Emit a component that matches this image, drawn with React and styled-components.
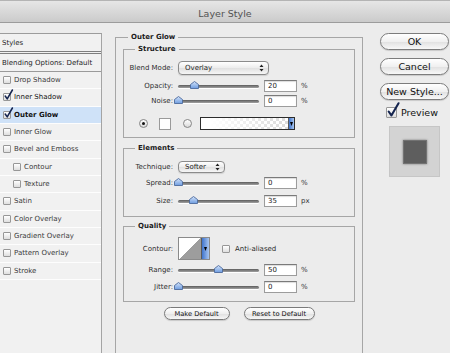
import React from "react";
import styled, { createGlobalStyle } from "styled-components";

const GlobalStyle = createGlobalStyle`
  html, body {
    margin: 0;
    padding: 0;
  }
  body {
    width: 450px;
    height: 353px;
    overflow: hidden;
    background: #ececec;
    font-family: "DejaVu Sans", Verdana, sans-serif;
    font-size: 7px;
    color: #262626;
  }
`;

const Window = styled.div`
  width: 450px;
  height: 353px;
  display: flex;
  flex-direction: column;
  background: #ececec;
  overflow: hidden;
`;

const TitleBar = styled.div`
  flex: none;
  height: 23px;
  box-sizing: border-box;
  padding-top: 3px;
  border-top: 1px solid #b4b4b4;
  border-bottom: 1px solid #9c9c9c;
  background: linear-gradient(#e6e6e6, #cbcbcb);
  display: flex;
  align-items: center;
  justify-content: center;
  font-size: 9.5px;
  color: #525252;
`;

const Body = styled.div`
  flex: 1;
  min-height: 0;
  display: flex;
`;

/* ---------- left styles list ---------- */

const StylesPanel = styled.div`
  flex: none;
  width: 102px;
  margin-top: 10px;
  box-sizing: border-box;
  border-top: 1px solid #9c9c9c;
  border-right: 1px solid #a4a4a4;
  background: #f1f1f1;
`;

const PanelHead = styled.div`
  height: ${(p) => p.$h}px;
  box-sizing: border-box;
  padding-left: 2px;
  display: flex;
  align-items: center;
  border-bottom: ${(p) => p.$line};
  white-space: nowrap;
`;

const EffectRow = styled.div`
  height: 17.33px;
  box-sizing: border-box;
  border-bottom: 1px solid #fdfdfd;
  display: flex;
  align-items: center;
  gap: 3px;
  padding-left: ${(p) => (p.$sub ? 13 : 3)}px;
  background: ${(p) => (p.$sel ? "#cfe2f8" : "transparent")};
  font-weight: ${(p) => (p.$sel ? "bold" : "normal")};
  color: ${(p) => (p.$on ? "#111" : "#3a3a3a")};
  white-space: nowrap;
`;

const Box = styled.span`
  position: relative;
  flex: none;
  width: ${(p) => p.$s}px;
  height: ${(p) => p.$s}px;
  box-sizing: border-box;
  border: 1px solid #979797;
  border-radius: 1px;
  background: linear-gradient(#ffffff, #dedede);
`;

const Tick = styled.svg`
  position: absolute;
  left: 0;
  bottom: 0;
  overflow: visible;
`;

const Check = ({ size = 8, on }) => (
  <Box $s={size}>
    {on && (
      <Tick width={size} height={size} viewBox="0 0 10 10">
        <path
          d="M1.5 5 L4 8.6 L10.5 -2.5"
          fill="none"
          stroke="#14244f"
          strokeWidth="1.9"
          strokeLinecap="round"
          strokeLinejoin="round"
        />
      </Tick>
    )}
  </Box>
);

/* ---------- main settings ---------- */

const Main = styled.div`
  flex: none;
  width: 248px;
  margin: 9px 0 0 13px;
`;

const Group = styled.fieldset`
  margin: ${(p) => p.$mt || 0}px 0 0 0;
  min-width: 0;
  box-sizing: border-box;
  border: 1px solid #a6a6a6;
  padding: ${(p) => p.$pad};
  height: ${(p) => (p.$tall ? "330px" : "auto")};
`;

const Legend = styled.legend`
  margin-left: ${(p) => p.$ml}px;
  padding: 0 3px;
  line-height: 10px;
  font-weight: bold;
  color: #1c1c1c;
`;

const Row = styled.div`
  display: flex;
  align-items: center;
  height: ${(p) => p.$h}px;
  margin-top: ${(p) => p.$mt || 0}px;
  padding-left: ${(p) => p.$indent || 0}px;
  white-space: nowrap;
`;

const Label = styled.span`
  flex: none;
  width: 49px;
  margin-right: 5px;
  text-align: right;
  color: #2e2e2e;
`;

const Popup = styled.div`
  flex: none;
  width: ${(p) => p.$w}px;
  height: ${(p) => p.$h}px;
  box-sizing: border-box;
  border: 1px solid #8b8b8b;
  border-radius: 4px;
  background: linear-gradient(#ffffff, #ececec 50%, #e0e0e0 51%, #f6f6f6);
  box-shadow: 0 1px 1px rgba(0, 0, 0, 0.12);
  display: flex;
  align-items: center;
  justify-content: space-between;
  padding: 0 4px 0 6px;
  color: #1f1f1f;
`;

const Arrows = () => (
  <svg width="5" height="8" viewBox="0 0 5 8">
    <path d="M2.5 0.5 L4.5 3 L0.5 3 Z M2.5 7.5 L4.5 5 L0.5 5 Z" fill="#222" />
  </svg>
);

const Track = styled.div`
  position: relative;
  flex: none;
  width: 81px;
  height: 3px;
  border-radius: 2px;
  background: linear-gradient(#5c5c5c, #a2a2a2);
  box-shadow: 0 1px 0 #ffffff;
`;

const Thumb = styled.svg`
  position: absolute;
  top: -4px;
  margin-left: -4.5px;
`;

const Field = styled.div`
  flex: none;
  width: 33px;
  height: 12px;
  box-sizing: border-box;
  margin-left: 5px;
  padding-left: 3px;
  border: 1px solid #9c9c9c;
  border-top-color: #7a7a7a;
  background: #fff;
  box-shadow: inset 0 1px 1px rgba(0, 0, 0, 0.14);
  line-height: 10px;
  color: #222;
`;

const Unit = styled.span`
  margin-left: 4px;
  color: #333;
`;

const Slider = ({ label, pct, value, unit }) => (
  <>
    <Label>{label}</Label>
    <Track>
      <Thumb
        width="9"
        height="8"
        viewBox="0 0 9 8"
        style={{ left: `${pct}%` }}
      >
        <defs>
          <linearGradient id="th" x1="0" y1="0" x2="0" y2="1">
            <stop offset="0" stopColor="#d4e4fa" />
            <stop offset="1" stopColor="#6e9ce0" />
          </linearGradient>
        </defs>
        <path
          d="M0.5 3.5 L4.5 0.5 L8.5 3.5 L8.5 7.5 L0.5 7.5 Z"
          fill="url(#th)"
          stroke="#4c6a9c"
          strokeWidth="0.9"
        />
      </Thumb>
    </Track>
    <Field>{value}</Field>
    <Unit>{unit}</Unit>
  </>
);

const Radio = styled.span`
  flex: none;
  width: 9px;
  height: 9px;
  box-sizing: border-box;
  border-radius: 50%;
  border: 1px solid #868686;
  background: linear-gradient(#ffffff, #d9d9d9);
  display: flex;
  align-items: center;
  justify-content: center;
  margin-right: ${(p) => p.$mr}px;

  &::after {
    content: "";
    display: ${(p) => (p.$on ? "block" : "none")};
    width: 3px;
    height: 3px;
    border-radius: 50%;
    background: #111;
  }
`;

const Swatch = styled.span`
  flex: none;
  width: 12px;
  height: 12px;
  box-sizing: border-box;
  border: 1px solid #9a9a9a;
  background: #fff;
  margin-right: 12px;
`;

const GradientBox = styled.div`
  flex: none;
  width: 95px;
  height: 13px;
  box-sizing: border-box;
  border: 1px solid #2c2c2c;
  display: flex;
  background: linear-gradient(to right, #ffffff 10%, rgba(255, 255, 255, 0) 100%),
    repeating-conic-gradient(#d8d8d8 0% 25%, #ffffff 0% 50%) 0 0 / 6px 6px;
`;

const BlueDrop = styled.span`
  margin-left: auto;
  width: ${(p) => p.$w}px;
  background: linear-gradient(to right, #3f74cc, #a9c6f0);
  border-left: 1px solid #5a5a5a;
  display: flex;
  align-items: center;
  justify-content: center;
`;

const DownTick = () => (
  <svg width="3" height="4" viewBox="0 0 3 4">
    <path d="M0 0 H3 L1.5 4 Z" fill="#000" />
  </svg>
);

const ContourBox = styled.div`
  flex: none;
  width: 32px;
  height: 23px;
  box-sizing: border-box;
  border: 1px solid #8a8a8a;
  display: flex;
  margin-right: 12px;
  background: #fff;
`;

const Curve = styled.span`
  flex: 1;
  background: linear-gradient(to bottom right, #ffffff 50%, #9d9d9d 50%);
`;

const CheckLabel = styled.span`
  margin-left: 5px;
  color: #2a2a2a;
`;

const ButtonRow = styled.div`
  display: flex;
  justify-content: center;
  gap: 14px;
  margin-top: 5px;
`;

const PillButton = styled.div`
  width: ${(p) => p.$w}px;
  height: 13px;
  box-sizing: border-box;
  border: 1px solid #7a7a7a;
  border-radius: 7px;
  background: linear-gradient(#ffffff, #efefef 50%, #dfdfdf 51%, #f7f7f7);
  box-shadow: 0 1px 1px rgba(0, 0, 0, 0.15);
  display: flex;
  align-items: center;
  justify-content: center;
  font-size: 6.7px;
  color: #111;
  white-space: nowrap;
`;

/* ---------- right column ---------- */

const Side = styled.div`
  flex: none;
  width: 70px;
  margin: 10px 0 0 17px;
  display: flex;
  flex-direction: column;
`;

const BigButton = styled.div`
  width: 69px;
  height: 17px;
  box-sizing: border-box;
  margin-bottom: ${(p) => p.$mb}px;
  border: 1px solid #7c7c7c;
  border-radius: 9px;
  background: linear-gradient(#ffffff, #f0f0f0 50%, #e0e0e0 51%, #f8f8f8);
  box-shadow: 0 1px 1px rgba(0, 0, 0, 0.15);
  display: flex;
  align-items: center;
  justify-content: center;
  font-size: 9.5px;
  color: #111;
  white-space: nowrap;
`;

const PreviewRow = styled.div`
  display: flex;
  align-items: center;
  gap: 4px;
  height: 12px;
  margin-top: 6px;
  padding-left: 6px;
  font-size: 9.5px;
  color: #111;
`;

const PreviewSwatch = styled.div`
  width: 51px;
  height: 51px;
  box-sizing: border-box;
  margin: 8px 0 0 9px;
  background: #d3d3d3;
  border: 1px solid #c6c6c6;
  display: flex;
  align-items: center;
  justify-content: center;
`;

const PreviewLayer = styled.div`
  width: 24px;
  height: 24px;
  box-sizing: border-box;
  background: #5e5e5e;
  border: 1px solid #737373;
  box-shadow: 0 0 2px rgba(60, 60, 60, 0.6);
`;

const effects = [
  { name: "Drop Shadow" },
  { name: "Inner Shadow", on: true },
  { name: "Outer Glow", on: true, sel: true },
  { name: "Inner Glow" },
  { name: "Bevel and Emboss" },
  { name: "Contour", sub: true },
  { name: "Texture", sub: true },
  { name: "Satin" },
  { name: "Color Overlay" },
  { name: "Gradient Overlay" },
  { name: "Pattern Overlay" },
  { name: "Stroke" },
];

const App = () => {
  return (
    <Window>
      <GlobalStyle />
      <TitleBar>Layer Style</TitleBar>
      <Body>
        <StylesPanel>
          <PanelHead $h={20} $line="3px double #7e7e7e">
            Styles
          </PanelHead>
          <PanelHead $h={18} $line="1px solid #9a9a9a">
            Blending Options: Default
          </PanelHead>
          {effects.map((e) => (
            <EffectRow key={e.name} $sub={e.sub} $sel={e.sel} $on={e.on}>
              <Check on={e.on} />
              {e.name}
            </EffectRow>
          ))}
        </StylesPanel>

        <Main>
          <Group $pad="2px 7px 0 7px" $tall>
            <Legend $ml={5}>Outer Glow</Legend>

            <Group $pad="7px 0 7px 0">
              <Legend $ml={11}>Structure</Legend>
              <Row $h={14}>
                <Label>Blend Mode:</Label>
                <Popup $w={91} $h={14}>
                  Overlay
                  <Arrows />
                </Popup>
              </Row>
              <Row $h={12} $mt={5}>
                <Slider label="Opacity:" pct={20} value="20" unit="%" />
              </Row>
              <Row $h={12} $mt={3}>
                <Slider label="Noise:" pct={0} value="0" unit="%" />
              </Row>
              <Row $h={13} $mt={10} $indent={15}>
                <Radio $on $mr={11} />
                <Swatch />
                <Radio $mr={8} />
                <GradientBox>
                  <BlueDrop $w={5}>
                    <DownTick />
                  </BlueDrop>
                </GradientBox>
              </Row>
            </Group>

            <Group $mt={5} $pad="8px 0 9px 0">
              <Legend $ml={11}>Elements</Legend>
              <Row $h={12}>
                <Label>Technique:</Label>
                <Popup $w={47} $h={12}>
                  Softer
                  <Arrows />
                </Popup>
              </Row>
              <Row $h={12} $mt={4}>
                <Slider label="Spread:" pct={0} value="0" unit="%" />
              </Row>
              <Row $h={12} $mt={6}>
                <Slider label="Size:" pct={19} value="35" unit="px" />
              </Row>
            </Group>

            <Group $mt={4} $pad="6px 0 8px 0">
              <Legend $ml={11}>Quality</Legend>
              <Row $h={23}>
                <Label>Contour:</Label>
                <ContourBox>
                  <Curve />
                  <BlueDrop $w={7}>
                    <DownTick />
                  </BlueDrop>
                </ContourBox>
                <Check />
                <CheckLabel>Anti-aliased</CheckLabel>
              </Row>
              <Row $h={12} $mt={4}>
                <Slider label="Range:" pct={50} value="50" unit="%" />
              </Row>
              <Row $h={12} $mt={5}>
                <Slider label="Jitter:" pct={0} value="0" unit="%" />
              </Row>
            </Group>

            <ButtonRow>
              <PillButton $w={66}>Make Default</PillButton>
              <PillButton $w={71}>Reset to Default</PillButton>
            </ButtonRow>
          </Group>
        </Main>

        <Side>
          <BigButton $mb={8}>OK</BigButton>
          <BigButton $mb={8}>Cancel</BigButton>
          <BigButton $mb={0}>New Style...</BigButton>
          <PreviewRow>
            <Check size={11} on />
            Preview
          </PreviewRow>
          <PreviewSwatch>
            <PreviewLayer />
          </PreviewSwatch>
        </Side>
      </Body>
    </Window>
  );
};

export default App;
